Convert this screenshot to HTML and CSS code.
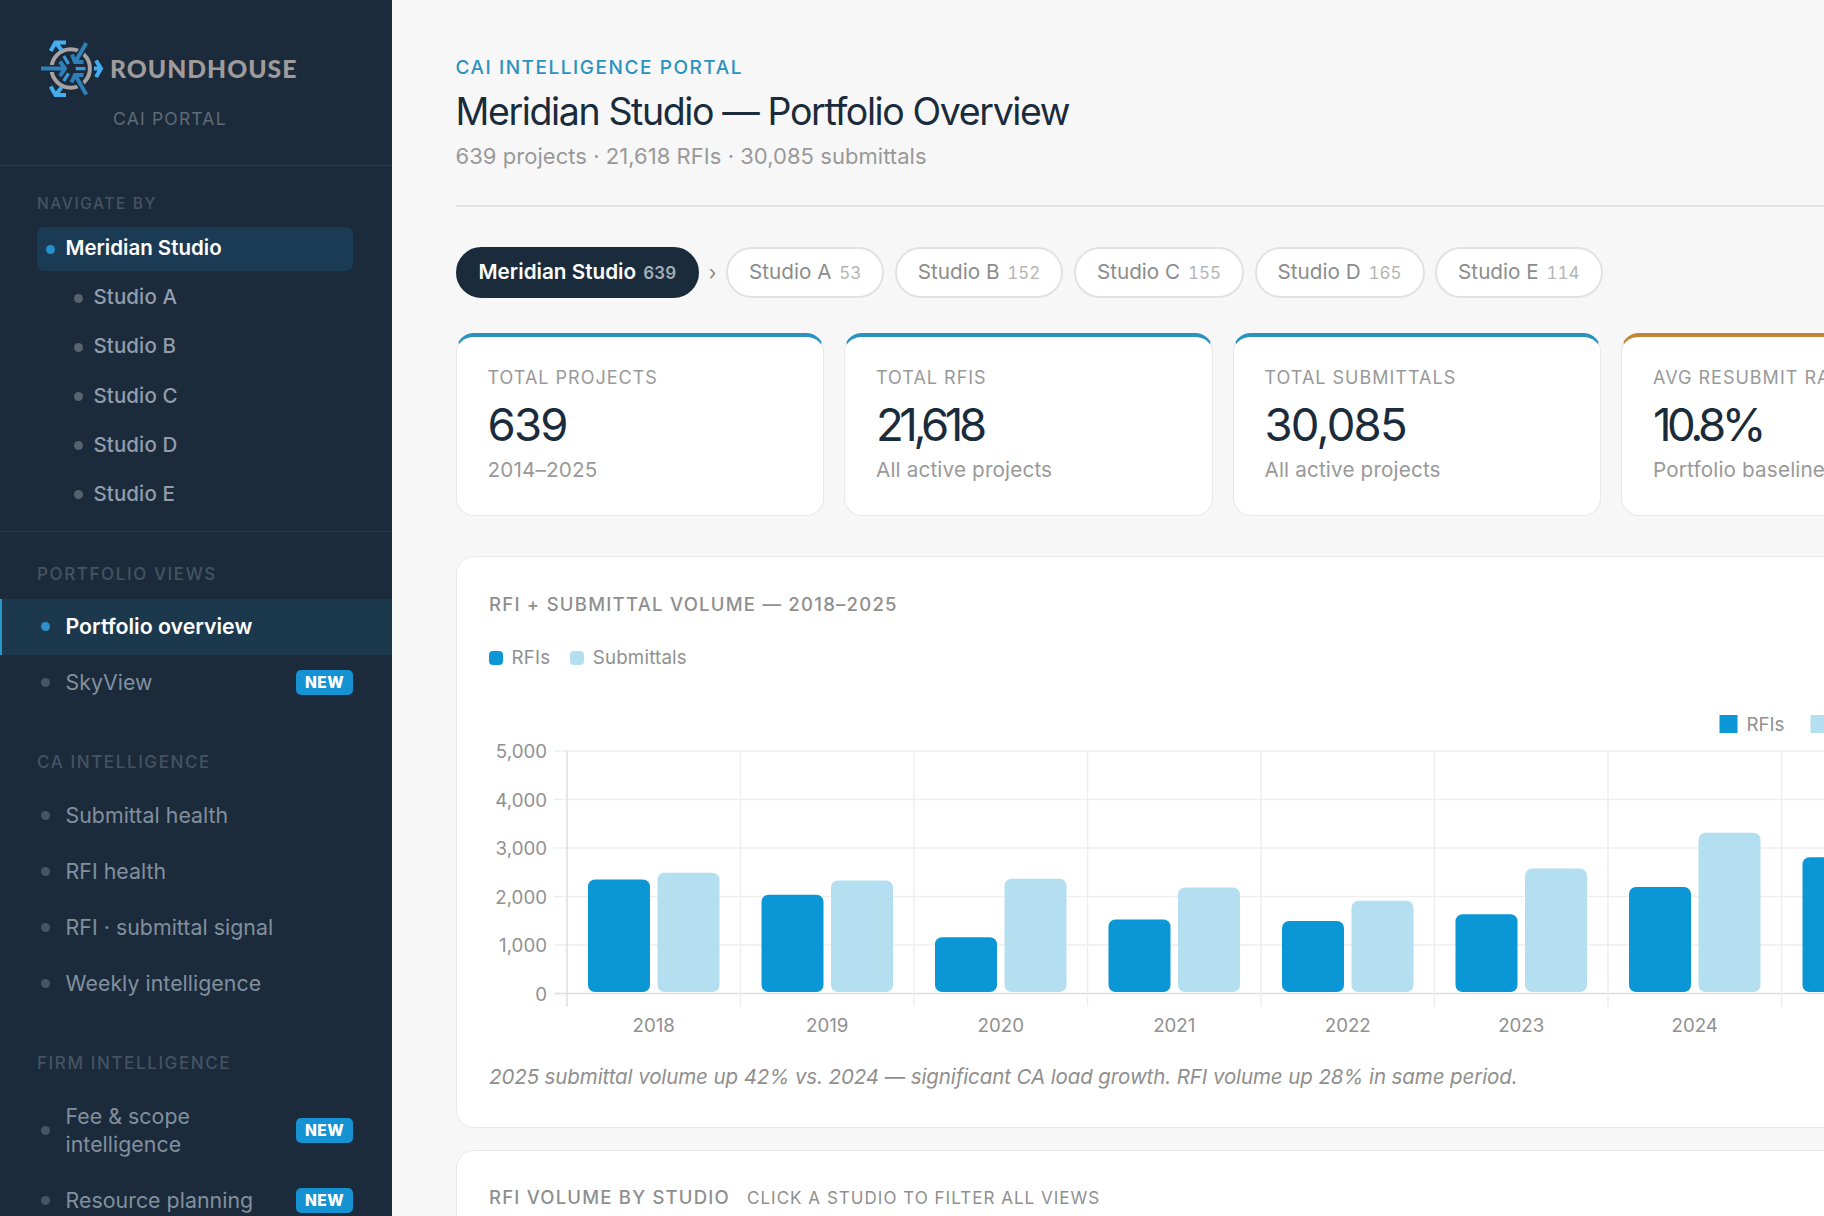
FILE: index.html
```
<!DOCTYPE html>
<html lang="en">
<head>
    <meta charset="UTF-8">
    <title>Meridian Studio — Portfolio Overview</title>
    <link rel="stylesheet" href="styles.css">
</head>
<body>
<div class="layout">
    <aside class="sidebar">
        <div class="brand">
            <div class="brand-row">
                <svg class="brand-mark" width="66" height="60" viewBox="0 0 66 60" fill="none">
                    <circle cx="30.7" cy="29.5" r="19.2" stroke="#a8a3a2" stroke-width="4"/>
                    <g stroke="#1b2b3c" stroke-width="7">
                        <path d="M9 29.6H16M43.5 9L38 18M43.5 51L38 41"/>
                    </g>
                    <g stroke="#2f7fb8" stroke-width="4">
                        <path d="M1 29.6H25M46.3 4L35 23.5M46.3 55.5L35 35.7"/>
                        <path d="M20 22.5L25 29.6L20 37M32 15.5L35 23H43.5M31.5 43.5L35 36H43.5"/>
                    </g>
                    <g stroke="#3d9bdc" stroke-width="3.2">
                        <path d="M23.8 17L28.5 25M23.8 42L28.5 34.3M35.7 29.6H45.5"/>
                    </g>
                    <g stroke="#45aef0" stroke-width="4">
                        <path d="M10.7 12L15.5 3.5H26M16 4L21.5 11M10.7 47.5L15.5 56H26M16 55.5L21.5 48.5M56 21.5L61 29.6L56 38M54 29.6H61"/>
                    </g>
                </svg>
                <span class="brand-name">ROUNDHOUSE</span>
            </div>
            <div class="brand-sub">CAI PORTAL</div>
        </div>

        <div class="studio-nav">
            <div class="nav-heading small">NAVIGATE BY</div>
            <a class="studio active"><i class="dot"></i><span>Meridian Studio</span></a>
            <a class="studio child"><i class="dot"></i><span>Studio A</span></a>
            <a class="studio child"><i class="dot"></i><span>Studio B</span></a>
            <a class="studio child"><i class="dot"></i><span>Studio C</span></a>
            <a class="studio child"><i class="dot"></i><span>Studio D</span></a>
            <a class="studio child"><i class="dot"></i><span>Studio E</span></a>
        </div>

        <nav class="views">
            <div class="nav-heading">PORTFOLIO VIEWS</div>
            <a class="view active"><i class="dot"></i><span>Portfolio overview</span></a>
            <a class="view"><i class="dot"></i><span>SkyView</span><b class="badge">NEW</b></a>

            <div class="nav-heading">CA INTELLIGENCE</div>
            <a class="view"><i class="dot"></i><span>Submittal health</span></a>
            <a class="view"><i class="dot"></i><span>RFI health</span></a>
            <a class="view"><i class="dot"></i><span>RFI · submittal signal</span></a>
            <a class="view"><i class="dot"></i><span>Weekly intelligence</span></a>

            <div class="nav-heading">FIRM INTELLIGENCE</div>
            <a class="view"><i class="dot"></i><span>Fee &amp; scope<br>intelligence</span><b class="badge">NEW</b></a>
            <a class="view"><i class="dot"></i><span>Resource planning</span><b class="badge">NEW</b></a>
        </nav>
    </aside>

    <main class="main">
        <header class="page-header">
            <div class="eyebrow">CAI INTELLIGENCE PORTAL</div>
            <h1>Meridian Studio — Portfolio Overview</h1>
            <p class="subtitle">639 projects · 21,618 RFIs · 30,085 submittals</p>
        </header>

        <div class="pills">
            <button class="pill active">Meridian Studio <span>639</span></button>
            <span class="chevron">›</span>
            <button class="pill">Studio A <span>53</span></button>
            <button class="pill">Studio B <span>152</span></button>
            <button class="pill">Studio C <span>155</span></button>
            <button class="pill">Studio D <span>165</span></button>
            <button class="pill">Studio E <span>114</span></button>
        </div>

        <section class="kpis">
            <div class="kpi">
                <div class="kpi-label">TOTAL PROJECTS</div>
                <div class="kpi-value">639</div>
                <div class="kpi-sub">2014–2025</div>
            </div>
            <div class="kpi">
                <div class="kpi-label">TOTAL RFIS</div>
                <div class="kpi-value tight">21,618</div>
                <div class="kpi-sub">All active projects</div>
            </div>
            <div class="kpi">
                <div class="kpi-label">TOTAL SUBMITTALS</div>
                <div class="kpi-value">30,085</div>
                <div class="kpi-sub">All active projects</div>
            </div>
            <div class="kpi amber">
                <div class="kpi-label">AVG RESUBMIT RATE</div>
                <div class="kpi-value tight">10.8%</div>
                <div class="kpi-sub">Portfolio baseline</div>
            </div>
        </section>

        <section class="card volume">
            <h2>RFI + SUBMITTAL VOLUME — 2018–2025</h2>
            <div class="legend">
                <i class="swatch rfi"></i><span>RFIs</span>
                <i class="swatch sub"></i><span>Submittals</span>
            </div>
            <svg class="chart" id="chart" width="1468" height="360" viewBox="0 0 1468 360"></svg>
            <p class="note">2025 submittal volume up 42% vs. 2024 — significant CA load growth. RFI volume up 28% in same period.</p>
        </section>

        <section class="card by-studio">
            <h2>RFI VOLUME BY STUDIO <small>CLICK A STUDIO TO FILTER ALL VIEWS</small></h2>
        </section>
    </main>
</div>

<script src="chart.js"></script>
</body>
</html>
```
FILE: styles.css
```
* {
    box-sizing: border-box;
}

body {
    margin: 0;
    height: 1216px;
    overflow: hidden;
    background: #f7f7f7;
    font-family: Inter, "Open Sans", sans-serif;
    color: #1a2b3c;
}

.layout {
    display: flex;
    height: 1216px;
    overflow: hidden;
}

/* Sidebar */
.sidebar {
    flex: none;
    width: 392px;
    height: 1216px;
    overflow: hidden;
    background: #1b2b3c;
}

.brand {
    height: 166px;
    padding: 39px 0 0 40px;
    border-bottom: 1px solid #2b3b4c;
}

.brand-row {
    display: flex;
    align-items: center;
    height: 60px;
}

.brand-name {
    margin-left: 4px;
    font-family: Lato, sans-serif;
    font-size: 24.7px;
    font-weight: 900;
    line-height: 30px;
    letter-spacing: 1px;
    color: #a09b9b;
}

.brand-sub {
    margin: 8px 0 0 73px;
    font-size: 17.5px;
    line-height: 24px;
    letter-spacing: 1.2px;
    color: #5f6b78;
}

.nav-heading {
    height: 77px;
    padding: 39px 0 0 37px;
    font-size: 17px;
    font-weight: 500;
    line-height: 24px;
    letter-spacing: 1.6px;
    color: #465362;
}

.nav-heading.small {
    height: 61px;
    padding: 26px 0 0;
    font-size: 15.5px;
}

.studio-nav {
    height: 366px;
    padding: 0 39px 0 37px;
    border-bottom: 1px solid #25374a;
}

.studio {
    display: flex;
    align-items: center;
    height: 44px;
    margin-bottom: 5.2px;
    padding-left: 9px;
    border-radius: 7px;
    font-size: 20.5px;
    font-weight: 500;
    letter-spacing: 0.1px;
    color: #929dab;
}

.studio span {
    padding-bottom: 3px;
}

.studio.child {
    padding-left: 37px;
}

.studio.active {
    background: #1b3a54;
    font-weight: 600;
    letter-spacing: 0;
    color: #fff;
}

.dot {
    flex: none;
    width: 9px;
    height: 9px;
    margin-right: 10.5px;
    border-radius: 50%;
    background: #56636f;
}

.active .dot {
    background: #2590cf;
}

.views > .nav-heading:first-child {
    height: 67px;
    padding-top: 30px;
}

.view {
    display: flex;
    align-items: center;
    min-height: 56px;
    padding: 13px 39px 15px 41px;
    font-size: 21.3px;
    line-height: 28px;
    letter-spacing: 0.05px;
    color: #82909d;
}

.view .dot {
    margin-right: 15.5px;
    background: #465564;
}

.view.active {
    padding-left: 39px;
    border-left: 2px solid #2a95c9;
    background: #1c384d;
    font-weight: 600;
    letter-spacing: 0;
    color: #fff;
}

.view.active .dot {
    background: #2f90cf;
}

.badge {
    width: 57px;
    height: 25px;
    margin-left: auto;
    border-radius: 5px;
    background: #1592d2;
    font-size: 15.5px;
    font-weight: 800;
    line-height: 25px;
    letter-spacing: 0.4px;
    text-align: center;
    color: #fff;
}

/* Main column */
.main {
    flex: none;
    width: 1597.5px;
    padding: 53px 0 0 63.5px;
}

.page-header {
    height: 154px;
    border-bottom: 2px solid #e4e4e4;
}

.eyebrow {
    padding-top: 1px;
    font-size: 19px;
    font-weight: 500;
    line-height: 28px;
    letter-spacing: 1.55px;
    color: #2b92bf;
}

h1 {
    margin: 5px 0 0;
    font-size: 37.5px;
    font-weight: 400;
    line-height: 50px;
    letter-spacing: -1.38px;
}

.subtitle {
    margin: 4px 0 0;
    font-size: 22px;
    line-height: 30px;
    letter-spacing: 0.04px;
    color: #999;
}

.pills {
    display: flex;
    align-items: center;
    margin-top: 40px;
}

.pill {
    height: 51px;
    margin: 0 10.5px 0 0;
    padding: 0 21px 2px;
    border: 2px solid #e2e2e2;
    border-radius: 26px;
    background: #fff;
    font-family: inherit;
    font-size: 20.7px;
    color: #8c8c8c;
}

.pill span {
    margin-left: 2px;
    font-size: 17px;
    font-variant-numeric: tabular-nums;
    color: #b5b5b5;
}

.pill.active {
    border-color: #1a2b3c;
    background: #1a2b3c;
    font-weight: 600;
    color: #fff;
}

.pill.active span {
    color: #a5adb5;
}

.chevron {
    margin: 0 9.5px 0 -1px;
    font-size: 20px;
    color: #888;
}

.kpis {
    display: grid;
    grid-template-columns: repeat(4, 1fr);
    gap: 20px;
    margin-top: 35px;
}

.kpi {
    height: 183px;
    padding: 29px 31px 0;
    border: 1.5px solid #e8e8e8;
    border-top: 4px solid #2b92c0;
    border-radius: 18px;
    background: #fff;
}

.kpi.amber {
    border-top-color: #c0873a;
}

.kpi-label {
    font-size: 18px;
    line-height: 24px;
    letter-spacing: 1px;
    color: #999;
}

.kpi-value {
    margin-top: 7px;
    font-size: 45.5px;
    line-height: 56px;
    letter-spacing: -1.8px;
}

.kpi-value.tight {
    letter-spacing: -4.4px;
}

.kpi-sub {
    margin-top: 3px;
    font-size: 20.7px;
    line-height: 28px;
    letter-spacing: 0.15px;
    color: #999;
}

.card {
    border: 1.5px solid #e8e8e8;
    border-radius: 18px;
    background: #fff;
}

.card h2 {
    margin: 0;
    font-size: 18.5px;
    font-weight: 500;
    line-height: 28px;
    letter-spacing: 1.25px;
    color: #8f8f8f;
}

.card small {
    margin-left: 11px;
    font-size: 17px;
    font-weight: 400;
    letter-spacing: 1.02px;
}

.volume {
    height: 572.5px;
    margin-top: 39.5px;
    padding: 33px 32.5px 0;
}

.by-studio {
    height: 200px;
    margin-top: 22px;
    padding: 32px 32.5px 0;
}

.card.by-studio h2 {
    letter-spacing: 1.2px;
}

.legend {
    display: flex;
    align-items: center;
    height: 28px;
    margin-top: 26px;
    font-size: 18.7px;
    letter-spacing: 0.2px;
    color: #909090;
}

.legend span {
    margin: 0 20px 0 8.5px;
}

.swatch {
    width: 14px;
    height: 14px;
    border-radius: 4px;
}

.swatch.rfi {
    background: #0b97d6;
}

.swatch.sub {
    background: #b4dff0;
}

.chart {
    display: block;
    margin-top: 14px;
}

.chart text {
    font-size: 18.7px;
    fill: #909090;
}

.note {
    margin: 17px 0 0;
    font-size: 20.5px;
    font-style: italic;
    line-height: 28px;
    letter-spacing: -0.1px;
    color: #8f8f8f;
}
```
FILE: chart.js
```
const years = [
    {year: 2018, rfis: 2350, submittals: 2490},
    {year: 2019, rfis: 2035, submittals: 2330},
    {year: 2020, rfis: 1160, submittals: 2365},
    {year: 2021, rfis: 1525, submittals: 2185},
    {year: 2022, rfis: 1495, submittals: 1910},
    {year: 2023, rfis: 1635, submittals: 2575},
    {year: 2024, rfis: 2195, submittals: 3315},
    {year: 2025, rfis: 2810, submittals: 4710},
];

const left = 78;
const top0 = 65;
const step = 48.5;
const colWidth = 173.5;
const bottom = top0 + step * 5;
const right = left + colWidth * years.length;

function line(x1, y1, x2, y2, color) {
    return `<line x1="${x1}" y1="${y1}" x2="${x2}" y2="${y2}" stroke="${color}" stroke-width="1.5"/>`;
}

function bar(x, value, color) {
    const h = value / 1000 * step;
    return `<rect x="${x}" y="${bottom - h}" width="62" height="${h - 1.5}" rx="7" fill="${color}"/>`;
}

let svg = '';

for (let i = 0; i <= 5; i++) {
    const y = top0 + step * i;
    svg += line(left - 13, y, right, y, i === 5 ? '#dedede' : '#eeeeee');
    svg += `<text x="58" y="${y + 7}" text-anchor="end">${((5 - i) * 1000).toLocaleString('en-US')}</text>`;
}

for (let i = 0; i <= years.length; i++) {
    const x = left + colWidth * i;
    svg += line(x, top0, x, bottom + 13, i === 0 ? '#dedede' : '#eeeeee');
}

years.forEach((d, i) => {
    const x = left + colWidth * i;
    svg += bar(x + 21, d.rfis, '#0b97d6');
    svg += bar(x + 90.5, d.submittals, '#b4dff0');
    svg += `<text x="${x + colWidth / 2}" y="${bottom + 38}" text-anchor="middle">${d.year}</text>`;
});

// dataset legend
svg += '<rect x="1230.5" y="29" width="18" height="18" fill="#0b97d6"/><text x="1257.5" y="45">RFIs</text>';
svg += '<rect x="1321.5" y="29" width="18" height="18" fill="#b4dff0"/><text x="1348.5" y="45">Submittals</text>';

document.getElementById('chart').innerHTML = svg;
```
